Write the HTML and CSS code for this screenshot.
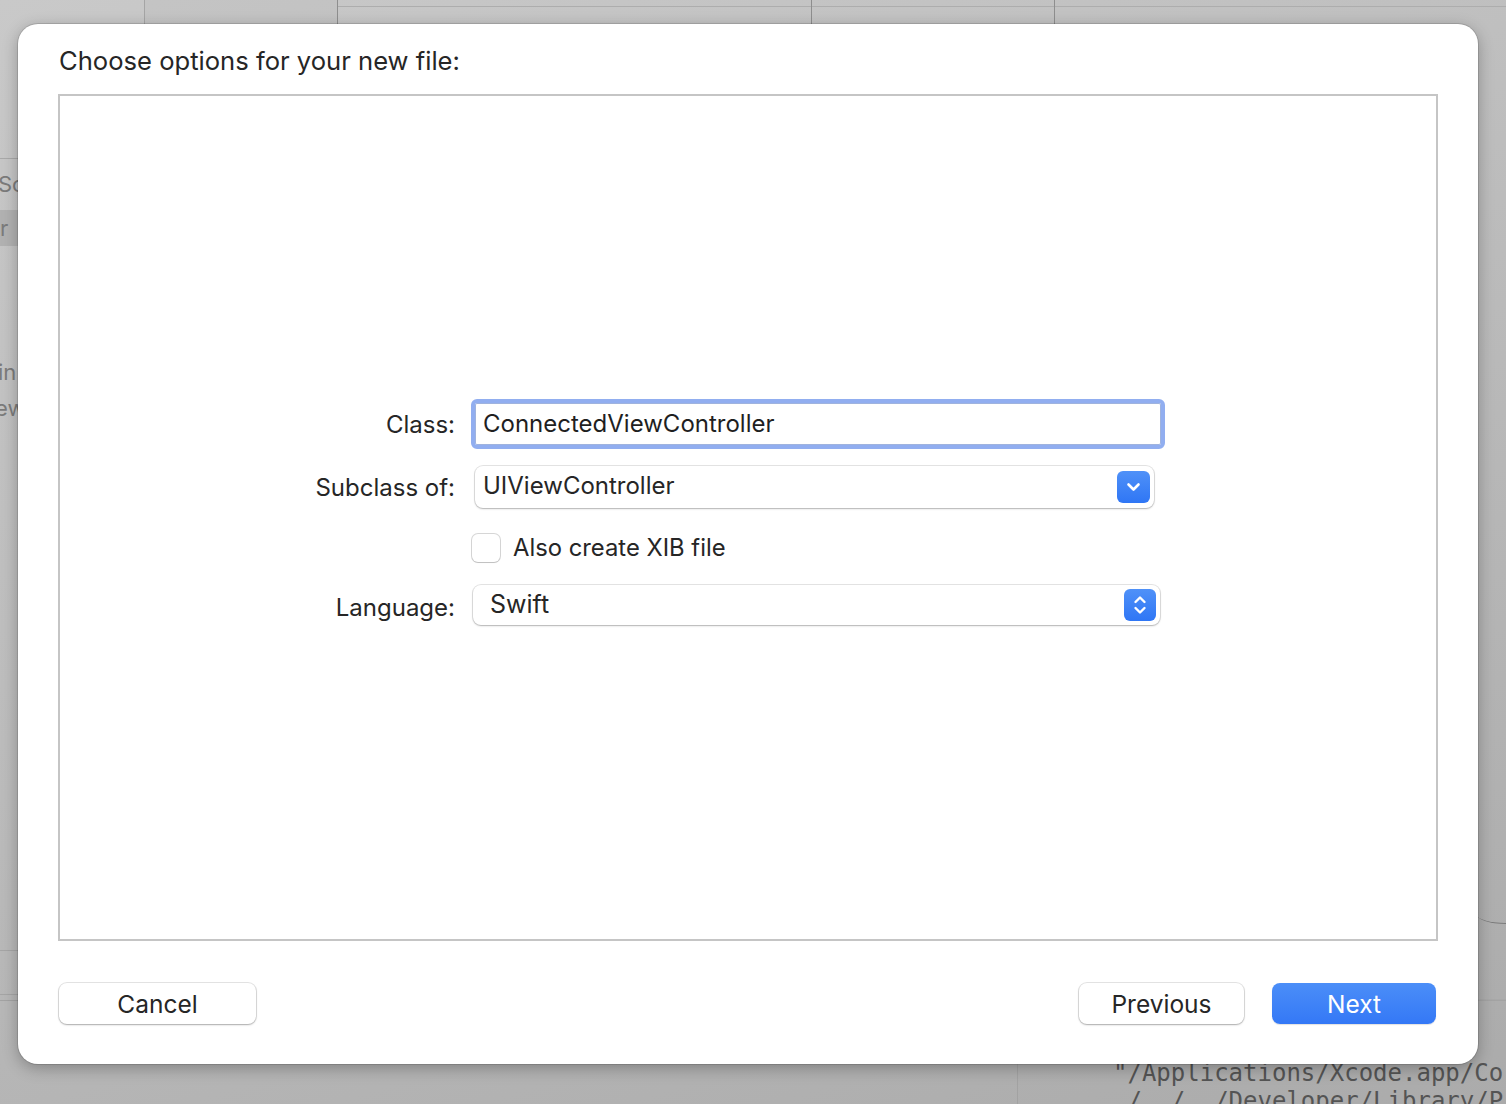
FILE: index.html
```html
<!DOCTYPE html>
<html lang="en">
<head>
<meta charset="utf-8">
<title>Choose options for your new file</title>
<link rel="stylesheet" href="styles.css">
</head>
<body>
<div class="window">
  <div class="tabbar">
    <div class="tab tab-a"></div>
    <div class="tab tab-b"></div>
    <div class="tab tab-c"><div class="tab-line"></div></div>
    <div class="tab tab-d"><div class="tab-line"></div></div>
    <div class="tab tab-e"><div class="tab-line"></div></div>
  </div>
  <div class="main">
    <aside class="sidebar">
      <div class="side-head"></div>
      <div class="side-item side-sc">Sc</div>
      <div class="side-item side-sel">r</div>
      <div class="side-spacer"></div>
      <div class="side-item side-in">in</div>
      <div class="side-item side-ew">ew</div>
      <div class="side-fill"></div>
      <div class="side-rule"></div>
      <div class="side-rule2"></div>
    </aside>
    <div class="editor"></div>
    <div class="inspector">
      <div class="insp-top"></div>
      <div class="insp-curve"></div>
      <div class="insp-rest"></div>
    </div>
  </div>
  <div class="console">
    <div class="console-left"></div>
    <pre class="console-text">"/Applications/Xcode.app/Co
 /../../Developer/Library/P</pre>
  </div>
</div>

<div class="sheet">
  <h1 class="sheet-title">Choose options for your new file:</h1>
  <div class="options-box">
    <div class="form">
      <div class="row row-class">
        <label class="label">Class:</label>
        <div class="textfield">ConnectedViewController</div>
      </div>
      <div class="row row-subclass">
        <label class="label">Subclass of:</label>
        <div class="combo">
          <span class="combo-text">UIViewController</span>
          <span class="combo-btn">
            <svg width="33" height="32" viewBox="0 0 33 32"><path d="M11.5 13.5 L16.5 18.5 L21.5 13.5" fill="none" stroke="#fff" stroke-width="2.6" stroke-linecap="round" stroke-linejoin="round"/></svg>
          </span>
        </div>
      </div>
      <div class="row row-check">
        <span class="label"></span>
        <div class="checkline">
          <span class="checkbox"></span>
          <span class="check-text">Also create XIB file</span>
        </div>
      </div>
      <div class="row row-lang">
        <label class="label">Language:</label>
        <div class="popup">
          <span class="popup-text">Swift</span>
          <span class="popup-btn">
            <svg width="32" height="32" viewBox="0 0 32 32"><path d="M11.5 13 L16 8.5 L20.5 13 M11.5 19 L16 23.5 L20.5 19" fill="none" stroke="#fff" stroke-width="2.4" stroke-linecap="round" stroke-linejoin="round"/></svg>
          </span>
        </div>
      </div>
    </div>
  </div>
  <div class="actions">
    <button class="btn btn-cancel">Cancel</button>
    <div class="actions-spacer"></div>
    <button class="btn btn-prev">Previous</button>
    <button class="btn btn-next">Next</button>
  </div>
</div>
</body>
</html>
```

FILE: styles.css
```css
* { box-sizing: border-box; }

html, body {
  margin: 0;
  padding: 0;
  width: 1506px;
  height: 1104px;
  overflow: hidden;
}

body {
  position: relative;
  font-family: Inter, "Noto Sans", "Liberation Sans", sans-serif;
  background: linear-gradient(160deg, #c9c9c9 0%, #bcbcbc 45%, #ababab 100%);
}

/* ---------- background window ---------- */
.window {
  display: flex;
  flex-direction: column;
  width: 1506px;
  height: 1104px;
}

.tabbar {
  display: flex;
  height: 40px;
  flex: none;
}
.tab { height: 100%; border-right: 1px solid #8e8e8e; }
.tab-a { width: 145px; border-right-color: #a5a5a5; }
.tab-b { width: 193px; background: rgba(0,0,0,0.02); }
.tab-c { width: 474px; }
.tab-d { width: 243px; }
.tab-e { flex: 1; border-right: none; }
.tab-line { height: 7px; border-bottom: 1px solid #adadad; }

.main {
  flex: 1;
  display: flex;
}

.sidebar {
  width: 18px;
  flex: none;
  overflow: hidden;
  display: flex;
  flex-direction: column;
  color: #7b7b7b;
  font-size: 22px;
  white-space: nowrap;
}
.side-head { height: 119px; border-bottom: 1px solid #a9a9a9; flex: none; }
.side-item { line-height: 36px; height: 36px; margin-left: -2px; flex: none; }
.side-sc { margin-top: 7px; }
.side-sel { background: #b1b1b1; margin-left: 0; margin-top: 8px; }
.side-spacer { height: 108px; flex: none; }
.side-in { height: 36px; }
.side-ew { height: 36px; margin-left: -5px; }
.side-fill { flex: 1; }
.side-rule { height: 44px; border-top: 1px solid #a5a5a5; flex: none; }
.side-rule2 { height: 6px; border-top: 1px solid #a5a5a5; flex: none; }

.editor { flex: 1; }

.inspector {
  width: 28px;
  flex: none;
  display: flex;
  flex-direction: column;
}
.insp-top { height: 854px; flex: none; }
.insp-curve {
  height: 30px;
  flex: none;
  border-bottom: 1.5px solid #7c7c7c;
  border-bottom-left-radius: 40px 14px;
  margin-left: -2px;
}
.insp-rest { flex: 1; border-bottom: 1px solid #a8a8a8; }

.console {
  height: 104px;
  flex: none;
  display: flex;
  border-top: 1px solid #a3a3a3;
}
.console-left { width: 1018px; border-right: 1px solid #a2a2a2; flex: none; }
.console-text {
  margin: 0;
  padding: 58px 0 0 95px;
  font-family: "DejaVu Sans Mono", "Liberation Mono", monospace;
  font-size: 24px;
  line-height: 28px;
  color: #545454;
  white-space: pre;
  overflow: hidden;
}

/* ---------- sheet ---------- */
.sheet {
  position: absolute;
  left: 18px;
  top: 24px;
  width: 1460px;
  height: 1040px;
  background: #ffffff;
  border-radius: 20px;
  box-shadow: 0 0 0 1px rgba(0,0,0,0.12), 0 4px 16px rgba(0,0,0,0.28);
  padding: 22px 40px 40px 40px;
  display: flex;
  flex-direction: column;
  color: #262626;
}

.sheet-title {
  margin: 0 0 18px 1px;
  font-size: 25.6px;
  font-weight: 400;
  line-height: 30px;
  height: 30px;
}

.options-box {
  height: 847px;
  flex: none;
  border: 2px solid #c5c5c5;
  padding-top: 303px;
}

.form {
  display: flex;
  flex-direction: column;
  padding-left: 195px;
}

.row {
  display: flex;
  align-items: center;
}
.label {
  width: 200px;
  flex: none;
  text-align: right;
  font-size: 24px;
  margin-right: 16px;
  color: #262626;
}

.row-class { height: 50px; }
.row-subclass { height: 42px; margin-top: 17px; }
.row-check { height: 28px; margin-top: 26px; }
.row-lang { height: 40px; margin-top: 23px; }
.row-lang .label { margin-top: 4px; }

.textfield {
  width: 694px;
  height: 50px;
  border: 4px solid #91aef0;
  border-radius: 6px;
  box-shadow: inset 0 0 0 1px #9fb3de;
  padding-left: 8px;
  font-size: 24px;
  line-height: 42px;
  color: #1f1f1f;
}

.combo {
  margin-left: 4px;
  width: 679px;
  height: 42px;
  background: #fff;
  border-radius: 8px;
  box-shadow: 0 0 0 1px rgba(0,0,0,0.10), 0 1px 2px rgba(0,0,0,0.22);
  display: flex;
  align-items: center;
  padding: 0 4px 0 8px;
}
.combo-text { flex: 1; font-size: 24px; line-height: 40px; margin-top: -2px; }
.combo-btn {
  width: 33px;
  height: 32px;
  border-radius: 6px;
  background: linear-gradient(#4f91f8, #2f76f5);
  display: flex;
}

.checkline {
  display: flex;
  align-items: center;
  margin-left: 1px;
}
.checkbox {
  width: 28px;
  height: 28px;
  border-radius: 6px;
  background: #fff;
  box-shadow: 0 0 0 1px rgba(0,0,0,0.16), 0 1px 1px rgba(0,0,0,0.10);
  margin-right: 13px;
}
.check-text { font-size: 23.8px; line-height: 28px; }

.popup {
  margin-left: 2px;
  width: 687px;
  height: 40px;
  background: #fff;
  border-radius: 8px;
  box-shadow: 0 0 0 1px rgba(0,0,0,0.10), 0 1px 2px rgba(0,0,0,0.22);
  display: flex;
  align-items: center;
  padding: 0 4px 0 17px;
}
.popup-text { flex: 1; font-size: 25px; line-height: 38px; margin-top: -3px; }
.popup-btn {
  width: 32px;
  height: 32px;
  border-radius: 6px;
  background: linear-gradient(#4f91f8, #2f76f5);
  display: flex;
}

.actions {
  margin-top: 42px;
  display: flex;
  height: 41px;
}
.actions-spacer { flex: 1; }
.btn {
  height: 41px;
  border: none;
  border-radius: 8px;
  background: #fff;
  font-family: Inter, "Noto Sans", "Liberation Sans", sans-serif;
  font-size: 24.5px;
  color: #262626;
  padding: 0;
  box-shadow: 0 0 0 1px rgba(0,0,0,0.10), 0 1px 2px rgba(0,0,0,0.25);
}
.btn-cancel { width: 197px; margin-left: 1px; }
.btn-prev { width: 165px; }
.btn-next {
  width: 164px;
  margin-left: 28px;
  margin-right: 2px;
  color: #fff;
  background: linear-gradient(#4b8ef8, #3478f6);
  box-shadow: 0 1px 1px rgba(0,0,0,0.12);
}
```
